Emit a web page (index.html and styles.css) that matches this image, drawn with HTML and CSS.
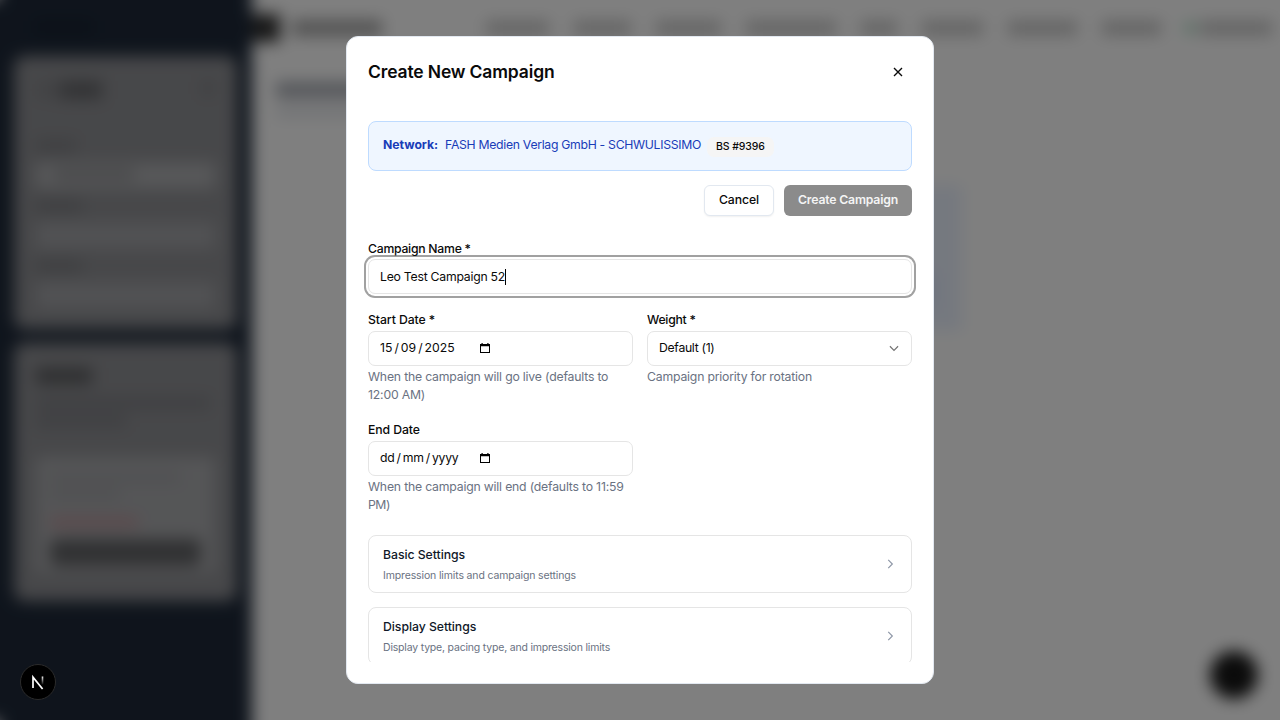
FILE: index.html
```html
<!DOCTYPE html>
<html lang="en">
<head>
<meta charset="utf-8">
<title>Create New Campaign</title>
<link rel="stylesheet" href="styles.css">
</head>
<body>
<div class="app" aria-hidden="true">
  <aside class="sidebar">
    <i class="brand"></i>
    <section class="panel filters">
      <div class="panel-head"><i class="bar heading"></i><i class="bar dot"></i></div>
      <i class="bar label"></i><div class="control"><i class="bar value"></i></div>
      <i class="bar label second"></i><div class="control dim"></div>
      <i class="bar label second"></i><div class="control dim"></div>
    </section>
    <section class="panel actions">
      <i class="bar title"></i>
      <i class="bar line"></i><i class="bar line short"></i>
      <div class="inner"><i class="bar faint"></i><i class="bar faint short"></i><i class="bar error"></i><div class="dark-button"></div></div>
    </section>
  </aside>
  <main class="main">
    <header class="topbar">
      <i class="logo"></i><i class="bar site"></i>
      <nav class="nav"><i class="w1"></i><i class="w2"></i><i class="w3"></i><i class="w4"></i><i class="w5"></i><i class="w6"></i><i class="w7"></i><i class="w8"></i><i class="online"></i><i class="w9"></i></nav>
    </header>
    <i class="bar page-title"></i><i class="bar page-sub"></i>
    <div class="blue-card"><i class="blue-text"></i></div>
  </main>
  <i class="fab"></i>
</div>
<div class="shade"></div>
<div class="next-badge"><svg width="16" height="16" viewBox="0 0 16 16" fill="none"><defs><linearGradient id="fade" x1="0" y1="2" x2="0" y2="11" gradientUnits="userSpaceOnUse"><stop stop-color="#fff"/><stop offset="1" stop-color="#fff" stop-opacity="0"/></linearGradient></defs><path d="M3 14V3.2L12.6 15" stroke="#fff" stroke-width="1.7"/><path d="M12.5 2.5v8" stroke="url(#fade)" stroke-width="1.6"/></svg></div>
<div class="dialog" role="dialog">
  <div class="dialog-head"><h2>Create New Campaign</h2>
    <svg class="close" width="16" height="16" viewBox="0 0 24 24"><path d="M18 6 6 18M6 6l12 12"/></svg></div>
  <div class="dialog-body">
    <div class="network"><strong>Network:</strong><span class="network-name">FASH Medien Verlag GmbH - SCHWULISSIMO</span><span class="badge">BS #9396</span></div>
    <div class="buttons"><button class="btn cancel">Cancel</button><button class="btn create">Create Campaign</button></div>
    <div class="field name"><label class="tight">Campaign Name *</label><div class="input focused"><span class="name-value">Leo Test Campaign 52</span><i class="caret"></i></div></div>
    <div class="grid">
      <div class="field"><label>Start Date *</label>
        <div class="input date"><span class="date-text">15<b>/</b>09<b>/</b>2025</span><svg class="cal" width="12" height="12" viewBox="0 0 12 12"><path d="M1 2h10v9H1zM2 4.2V10h8V4.2z" fill-rule="evenodd"/><path d="M2.5 1h1.2v2H2.5zM8.3 1h1.2v2H8.3z"/></svg></div>
        <p>When the campaign will go live (defaults to<br>12:00 AM)</p></div>
      <div class="field"><label class="tight">Weight *</label>
        <div class="input select"><span class="select-value">Default (1)</span><svg class="chev" width="14" height="14" viewBox="0 0 24 24"><path d="m5 9 7 7 7-7"/></svg></div>
        <p>Campaign priority for rotation</p></div>
      <div class="field"><label>End Date</label>
        <div class="input date"><span class="date-text empty">dd<b>/</b>mm<b>/</b>yyyy</span><svg class="cal" width="12" height="12" viewBox="0 0 12 12"><path d="M1 2h10v9H1zM2 4.2V10h8V4.2z" fill-rule="evenodd"/><path d="M2.5 1h1.2v2H2.5zM8.3 1h1.2v2H8.3z"/></svg></div>
        <p>When the campaign will end (defaults to 11:59<br><span class="pm">PM)</span></p></div>
    </div>
    <section class="section"><div><h3>Basic Settings</h3><small class="basic">Impression limits and campaign settings</small></div><svg class="chev" width="14" height="14" viewBox="0 0 24 24"><path d="m9 19 7-7-7-7"/></svg></section>
    <section class="section"><div><h3>Display Settings</h3><small>Display type, pacing type, and impression limits</small></div><svg class="chev" width="14" height="14" viewBox="0 0 24 24"><path d="m9 19 7-7-7-7"/></svg></section>
  </div>
</div>
</body>
</html>
```

FILE: styles.css
```css
*{box-sizing:border-box}
body{margin:0;width:1280px;height:720px;overflow:hidden;font-family:Inter,"Liberation Sans",sans-serif;font-size:12.25px;line-height:17.5px;color:#0a0a0a;background:#fff}
i{display:block;font-style:normal}
.app{display:flex;width:1280px;height:720px;filter:blur(8px);background:#fff;box-shadow:0 0 0 40px #fff}
.sidebar{width:252px;flex:none;background:#1e2939;padding:20px 15px 0 14px;box-shadow:-30px 0 0 #1e2939,0 -30px 0 #1e2939,0 30px 0 #1e2939}
.brand{width:60px;height:14px;margin:0 0 22px 20px;background:#172231}
.panel{background:#8f9094;border-radius:10px;padding:25px 22px}
.filters{height:273px;margin-bottom:14px}
.actions{height:258px}
.bar{background:#777a7f}
.panel-head{display:flex;justify-content:space-between;margin-bottom:41px}
.heading{width:66px;height:18px;background:linear-gradient(90deg,#85868a 30%,#65666a 45%)}
.dot{width:14px;height:14px;background:#818286}
.label{width:40px;height:12px;background:#7e7f83;margin-bottom:10px}
.second{margin-top:11px;width:46px}
.control{height:27px;background:#afb0b3;padding:6px 18px}
.control.dim{background:#a3a4a8;height:27px}
.value{width:80px;height:13px;background:#959699}
.title{width:56px;height:16px;background:#5c5d60;margin-bottom:13px}
.line{width:174px;height:12px;background:#7f8085;margin-bottom:6px}
.line.short{width:90px}
.inner{margin-top:30px;height:115px;background:#abacaf;padding:15px 14px}
.faint{width:130px;height:11px;background:#a0a1a5;margin-bottom:6px}
.faint.short{width:70px}
.error{width:88px;height:8px;background:#bb8b91;margin-top:18px}
.dark-button{height:27px;background:#626366;margin-top:13px;border-radius:6px}
.main{flex:1;min-width:0}
.topbar{height:56px;display:flex;align-items:center;padding-right:8px}
.logo{width:28px;height:28px;background:#333}
.site{width:90px;height:16px;margin-left:12px;background:#a5a5a5}
.nav{flex:1;display:flex;align-items:center;margin-left:104px}
.nav i{height:14px;background:#c6c6c6;margin-right:25px;flex:none}
.nav .w1{width:63px}.nav .w2{width:57px}.nav .w3{width:65px}.nav .w4{width:90px}.nav .w5{width:36px}.nav .w6{width:61px}.nav .w7{width:69px}.nav .w8{width:59px}
.nav .online{width:8px;height:8px;margin-right:6px;background:#73c99a}
.nav .w9{width:72px;margin-right:0}
.page-title{width:132px;height:16px;margin:26px 0 0 24px;background:#a9adb5}
.page-sub{width:170px;height:10px;margin:9px 0 0 24px;background:#e0e3e8}
.blue-card{width:400px;height:146px;margin:68px 0 0 310px;background:#ebf2ff;padding:88px 26px 0 0}
.blue-text{width:40px;height:35px;background:#dce8ff;margin-left:auto}
.fab{position:absolute;left:1210px;top:651px;width:48px;height:48px;border-radius:50%;background:#171717}
.shade{position:absolute;inset:0;background:rgba(0,0,0,.5)}
.next-badge{position:absolute;left:20px;top:664px;width:36px;height:36px;border-radius:50%;background:#000;border:1px solid #2b2b2b;display:flex;align-items:center;justify-content:center}
.dialog{position:absolute;left:346px;top:36px;width:588px;height:648px;border:1px solid #e2e8f0;border-radius:12px;background:#fff;padding:21px}
.dialog-head{display:flex;justify-content:space-between;align-items:center;height:28px;padding-right:6px}
h2{margin:0;font-size:17.5px;line-height:24px;font-weight:600;letter-spacing:-.15px}
.dialog-body{height:576px;margin:0 -5px;padding:35px 5px 0;overflow:hidden}
svg{flex:none}
.close{fill:none;stroke:#0a0a0a;stroke-width:2}
.network{height:50px;border:1px solid #bedbff;border-radius:8px;background:#eff6ff;display:flex;align-items:center;padding:0 14px 2px;color:#193cb8}
.network strong{font-weight:700;letter-spacing:-.05px;margin-right:7px}
.network-name{letter-spacing:-.311px}
.badge{background:#f5f5f5;border-radius:7px;height:20px;padding:1px 9px;margin:3px 0 0 6px;color:#0a0a0a;font-size:10.5px;font-weight:500;letter-spacing:-.139px}
.buttons{display:flex;justify-content:flex-end;gap:10px;margin-top:14px}
.btn{font:500 12.25px/17.5px Inter,sans-serif;height:31px;border-radius:6px;padding:0 0 1px;border:1px solid #e2e8f0;background:#fff;color:#0a0a0a;white-space:nowrap}
.cancel{width:70px;letter-spacing:-.112px;box-shadow:0 1px 2px rgba(0,0,0,.06)}
.create{width:128px;border:0;background:#8b8b8b;color:#f4f4f4;font-weight:600;letter-spacing:-.188px}
label{display:block;height:20px;line-height:19px;font-weight:500;white-space:nowrap;letter-spacing:-.09px}
label.tight{letter-spacing:-.27px}
.grid label{line-height:17px}
.name{margin-top:23px}
.input{height:35px;border:1px solid #e5e5e5;border-radius:7px;background:#fff;display:flex;align-items:center;padding:0 11px 1px}
.focused{padding-bottom:0;box-shadow:0 0 0 2px #fff,0 0 0 4px #a1a1a1}
.name-value{letter-spacing:-.251px}
.caret{width:1px;height:16px;background:#000}
.grid{display:grid;grid-template-columns:265px 265px;gap:18px 14px;margin-top:17px}
.date-text{width:99px}
.date-text.empty{letter-spacing:-.237px}
.date-text b{font-weight:400;padding:0 2px}
.select{justify-content:space-between;padding-right:10px}
.select-value{letter-spacing:-.315px}
.chev{fill:none;stroke:#737373;stroke-width:2}
p{margin:2px 0 0;color:#6a7282;white-space:nowrap;letter-spacing:-.2px}
.pm{letter-spacing:-.5px}
.section{height:58px;border:1px solid #e5e5e5;border-radius:8px;margin-top:14px;padding:0 14px;display:flex;align-items:center;justify-content:space-between}
.grid+.section{margin-top:22px}
h3{margin:0;font-size:12.25px;line-height:17px;padding-bottom:2px;font-weight:500;color:#101828;letter-spacing:-.045px}
small{display:block;font-size:10.5px;line-height:14px;margin-top:4px;color:#6a7282;letter-spacing:-.193px}
small.basic{letter-spacing:-.137px}
.section .chev{stroke:#8d96a6}
```
